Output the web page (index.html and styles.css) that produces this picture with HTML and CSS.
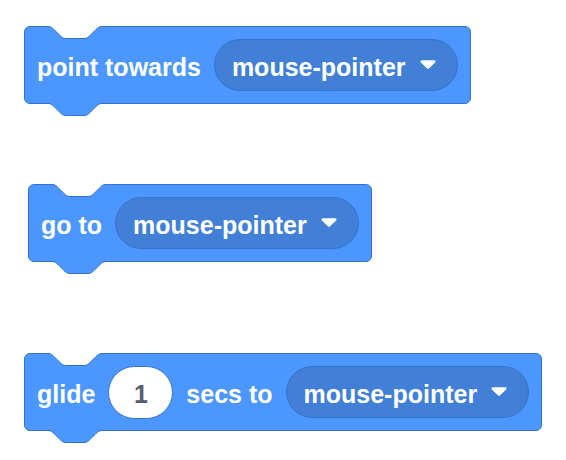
FILE: index.html
```html
<!DOCTYPE html>
<html>
<head>
<meta charset="utf-8">
<link rel="stylesheet" href="styles.css">
</head>
<body>
<div class="canvas">

  <div class="block b1">
    <svg class="notch" width="58" height="14" viewBox="0 0 58 14"><path class="notch-fill" d="M0,0 V0.5 H2 c3,0 4.5,1.5 6,3 l6,6 c1.5,1.5 3,3 6,3 h18 c3,0 4.5,-1.5 6,-3 l6,-6 c1.5,-1.5 3,-3 6,-3 H58 V0 Z"/><path class="edge" d="M0,0.5 H2 c3,0 4.5,1.5 6,3 l6,6 c1.5,1.5 3,3 6,3 h18 c3,0 4.5,-1.5 6,-3 l6,-6 c1.5,-1.5 3,-3 6,-3 H58"/></svg>
    <span class="label">point towards</span>
    <span class="dropdown"><span class="dd-text">mouse-pointer</span><svg class="arrow" width="16" height="10" viewBox="0 0 16 10"><path d="M1.75,1.5 H14.25 L8,7.6 Z"/></svg></span>
    <svg class="tab" width="58" height="14" viewBox="0 0 58 14"><path class="tab-fill" d="M0,0 V0.5 H2 c3,0 4.5,1.5 6,3 l6,6 c1.5,1.5 3,3 6,3 h18 c3,0 4.5,-1.5 6,-3 l6,-6 c1.5,-1.5 3,-3 6,-3 H58 V0 Z"/><path class="edge" d="M0,0.5 H2 c3,0 4.5,1.5 6,3 l6,6 c1.5,1.5 3,3 6,3 h18 c3,0 4.5,-1.5 6,-3 l6,-6 c1.5,-1.5 3,-3 6,-3 H58"/></svg>
  </div>

  <div class="block b2">
    <svg class="notch" width="58" height="14" viewBox="0 0 58 14"><path class="notch-fill" d="M0,0 V0.5 H2 c3,0 4.5,1.5 6,3 l6,6 c1.5,1.5 3,3 6,3 h18 c3,0 4.5,-1.5 6,-3 l6,-6 c1.5,-1.5 3,-3 6,-3 H58 V0 Z"/><path class="edge" d="M0,0.5 H2 c3,0 4.5,1.5 6,3 l6,6 c1.5,1.5 3,3 6,3 h18 c3,0 4.5,-1.5 6,-3 l6,-6 c1.5,-1.5 3,-3 6,-3 H58"/></svg>
    <span class="label">go to</span>
    <span class="dropdown"><span class="dd-text">mouse-pointer</span><svg class="arrow" width="16" height="10" viewBox="0 0 16 10"><path d="M1.75,1.5 H14.25 L8,7.6 Z"/></svg></span>
    <svg class="tab" width="58" height="14" viewBox="0 0 58 14"><path class="tab-fill" d="M0,0 V0.5 H2 c3,0 4.5,1.5 6,3 l6,6 c1.5,1.5 3,3 6,3 h18 c3,0 4.5,-1.5 6,-3 l6,-6 c1.5,-1.5 3,-3 6,-3 H58 V0 Z"/><path class="edge" d="M0,0.5 H2 c3,0 4.5,1.5 6,3 l6,6 c1.5,1.5 3,3 6,3 h18 c3,0 4.5,-1.5 6,-3 l6,-6 c1.5,-1.5 3,-3 6,-3 H58"/></svg>
  </div>

  <div class="block b3">
    <svg class="notch" width="58" height="14" viewBox="0 0 58 14"><path class="notch-fill" d="M0,0 V0.5 H2 c3,0 4.5,1.5 6,3 l6,6 c1.5,1.5 3,3 6,3 h18 c3,0 4.5,-1.5 6,-3 l6,-6 c1.5,-1.5 3,-3 6,-3 H58 V0 Z"/><path class="edge" d="M0,0.5 H2 c3,0 4.5,1.5 6,3 l6,6 c1.5,1.5 3,3 6,3 h18 c3,0 4.5,-1.5 6,-3 l6,-6 c1.5,-1.5 3,-3 6,-3 H58"/></svg>
    <span class="label">glide</span>
    <span class="number"><span class="num-text">1</span></span>
    <span class="label">secs to</span>
    <span class="dropdown"><span class="dd-text">mouse-pointer</span><svg class="arrow" width="16" height="10" viewBox="0 0 16 10"><path d="M1.75,1.5 H14.25 L8,7.6 Z"/></svg></span>
    <svg class="tab" width="58" height="14" viewBox="0 0 58 14"><path class="tab-fill" d="M0,0 V0.5 H2 c3,0 4.5,1.5 6,3 l6,6 c1.5,1.5 3,3 6,3 h18 c3,0 4.5,-1.5 6,-3 l6,-6 c1.5,-1.5 3,-3 6,-3 H58 V0 Z"/><path class="edge" d="M0,0.5 H2 c3,0 4.5,1.5 6,3 l6,6 c1.5,1.5 3,3 6,3 h18 c3,0 4.5,-1.5 6,-3 l6,-6 c1.5,-1.5 3,-3 6,-3 H58"/></svg>
  </div>

</div>
</body>
</html>
```
FILE: styles.css
```css
html, body {
  margin: 0;
  padding: 0;
  background: #ffffff;
}

body {
  min-height: 460px;
}

.canvas {
  display: flex;
  flex-direction: column;
  align-items: flex-start;
  padding-bottom: 24px;
  font-family: "Liberation Sans", Arial, sans-serif;
  font-weight: bold;
  font-size: 25px;
}

.block {
  position: relative;
  box-sizing: border-box;
  display: flex;
  align-items: center;
  gap: 13px;
  height: 78px;
  padding: 0 12px 0 12px;
  background: #4C97FF;
  border: 1px solid #3373CC;
  border-radius: 6px;
  color: #ffffff;
}

.b1 { margin: 26px 0 0 24px; }
.b2 { margin: 80px 0 0 28px; }
.b3 { margin: 91px 0 0 24px; }

.notch {
  position: absolute;
  top: -1px;
  left: 21px;
  display: block;
}

.tab {
  position: absolute;
  top: 100%;
  left: 21px;
  display: block;
  overflow: visible;
}

.notch-fill { fill: #ffffff; }
.tab-fill { fill: #4C97FF; }
.edge {
  fill: none;
  stroke: #3373CC;
  stroke-width: 1;
}

.label,
.dd-text,
.num-text {
  line-height: 28px;
  padding-top: 4px;
  white-space: nowrap;
}

.dropdown {
  box-sizing: border-box;
  display: flex;
  align-items: center;
  gap: 14px;
  height: 52px;
  padding: 0 21px 0 17px;
  background: #4280D7;
  border: 1px solid #3373CC;
  border-radius: 26px;
  white-space: nowrap;
}

.arrow {
  display: block;
}
.arrow path {
  fill: #ffffff;
  stroke: #ffffff;
  stroke-width: 2.5;
  stroke-linejoin: round;
}

.number {
  box-sizing: border-box;
  display: flex;
  align-items: center;
  justify-content: center;
  width: 65px;
  height: 53px;
  background: #ffffff;
  border: 1px solid #3373CC;
  border-radius: 27px;
  color: #575E75;
}
```
